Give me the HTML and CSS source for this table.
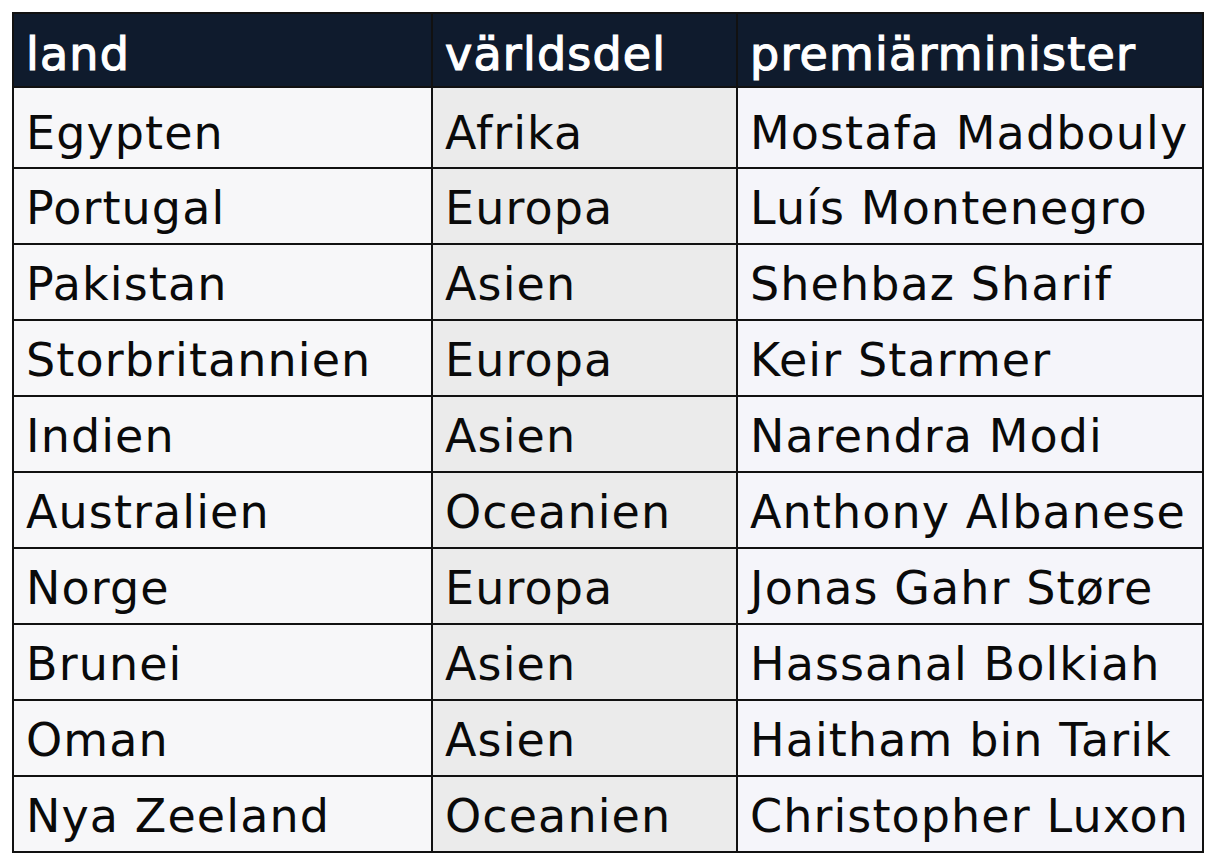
FILE: index.html
```html
<!DOCTYPE html>
<html lang="sv">
<head>
<meta charset="utf-8">
<title>Premiärministrar</title>
<link rel="stylesheet" href="styles.css">
</head>
<body>
<table class="tbl">
  <colgroup>
    <col class="c1"><col class="c2"><col class="c3">
  </colgroup>
  <thead>
    <tr class="head"><th>land</th><th>världsdel</th><th>premiärminister</th></tr>
  </thead>
  <tbody>
    <tr class="first"><td>Egypten</td><td>Afrika</td><td>Mostafa Madbouly</td></tr>
    <tr><td>Portugal</td><td>Europa</td><td>Luís Montenegro</td></tr>
    <tr><td>Pakistan</td><td>Asien</td><td>Shehbaz Sharif</td></tr>
    <tr><td>Storbritannien</td><td>Europa</td><td>Keir Starmer</td></tr>
    <tr><td>Indien</td><td>Asien</td><td>Narendra Modi</td></tr>
    <tr><td>Australien</td><td>Oceanien</td><td>Anthony Albanese</td></tr>
    <tr><td>Norge</td><td>Europa</td><td>Jonas Gahr Støre</td></tr>
    <tr><td>Brunei</td><td>Asien</td><td>Hassanal Bolkiah</td></tr>
    <tr><td>Oman</td><td>Asien</td><td>Haitham bin Tarik</td></tr>
    <tr><td>Nya Zeeland</td><td>Oceanien</td><td>Christopher Luxon</td></tr>
  </tbody>
</table>
</body>
</html>
```

FILE: styles.css
```css
html, body {
  margin: 0;
  padding: 0;
  background: #ffffff;
}
body {
  padding: 12px 0 0 12px;
  font-family: "DejaVu Sans", "Open Sans", sans-serif;
}
.tbl {
  border-collapse: collapse;
  table-layout: fixed;
  width: 1190px;
  border: 2px solid #111;
}
.c1 { width: 419px; }
.c2 { width: 305px; }
.c3 { width: 466px; }
.tbl th, .tbl td {
  border: 2px solid #111;
  padding: 4px 0 0 12px;
  text-align: left;
  white-space: nowrap;
  overflow: hidden;
  color: #0a0a0a;
  font-size: 46px;
  font-weight: 400;
  letter-spacing: 1.1px;
  line-height: 1;
  height: 76px;
  box-sizing: border-box;
}
.head th {
  background: #0f1b2d;
  color: #ffffff;
  font-weight: 400;
  letter-spacing: 1.2px;
  -webkit-text-stroke: 1.2px #ffffff;
  height: 74px;
  padding-top: 7px;
  vertical-align: middle;
}
.first td {
  height: 81px;
  padding-top: 10px;
}
.tbl td:nth-child(1) { background: #f7f7f9; }
.tbl td:nth-child(2) { background: #ebebeb; }
.tbl td:nth-child(3) { background: #f5f5fa; }
```
